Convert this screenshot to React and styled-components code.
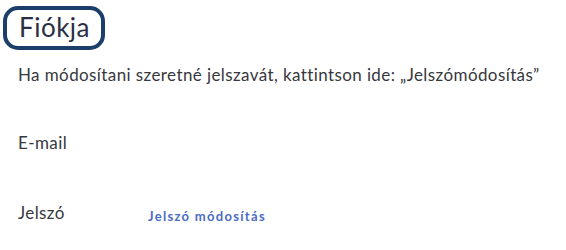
import React from 'react';
import styled, { createGlobalStyle } from 'styled-components';

const GlobalStyle = createGlobalStyle`
  html, body {
    margin: 0;
    padding: 0;
    background: #fff;
  }
  body {
    font-family: 'Lato', 'Liberation Sans', sans-serif;
    color: #2f3238;
  }
`;

const Page = styled.div`
  width: 566px;
  height: 250px;
  padding: 6px 0 0 3px;
  box-sizing: border-box;
`;

const Heading = styled.h1`
  display: inline-block;
  margin: 0;
  padding: 1px 11px 3px 12px;
  border: 4px solid #1b3f6a;
  border-radius: 15px;
  font-size: 26px;
  font-weight: 400;
  line-height: 32px;
  color: #2a2f45;
  letter-spacing: 0.5px;
`;

const Intro = styled.p`
  margin: 15px 0 0 15px;
  font-size: 17px;
  line-height: 20px;
  letter-spacing: 0.4px;
  color: #36383d;
`;

const Fields = styled.div`
  display: flex;
  flex-direction: column;
  gap: 50px;
  margin: 48px 0 0 15px;
`;

const Row = styled.div`
  display: flex;
  align-items: baseline;
`;

const Label = styled.span`
  width: 130px;
  font-size: 17px;
  line-height: 20px;
  letter-spacing: 0.4px;
  color: #36383d;
`;

const Link = styled.a`
  font-size: 13px;
  font-weight: 700;
  color: #4a6cc4;
  text-decoration: none;
  letter-spacing: 1.3px;
  position: relative;
  top: 2px;
  cursor: pointer;
`;

export default function App() {
  return (
    <>
      <GlobalStyle />
      <Page>
        <Heading>Fiókja</Heading>
        <Intro>Ha módosítani szeretné jelszavát, kattintson ide: „Jelszómódosítás”</Intro>
        <Fields>
          <Row>
            <Label>E-mail</Label>
          </Row>
          <Row>
            <Label>Jelszó</Label>
            <Link>Jelszó módosítás</Link>
          </Row>
        </Fields>
      </Page>
    </>
  );
}
